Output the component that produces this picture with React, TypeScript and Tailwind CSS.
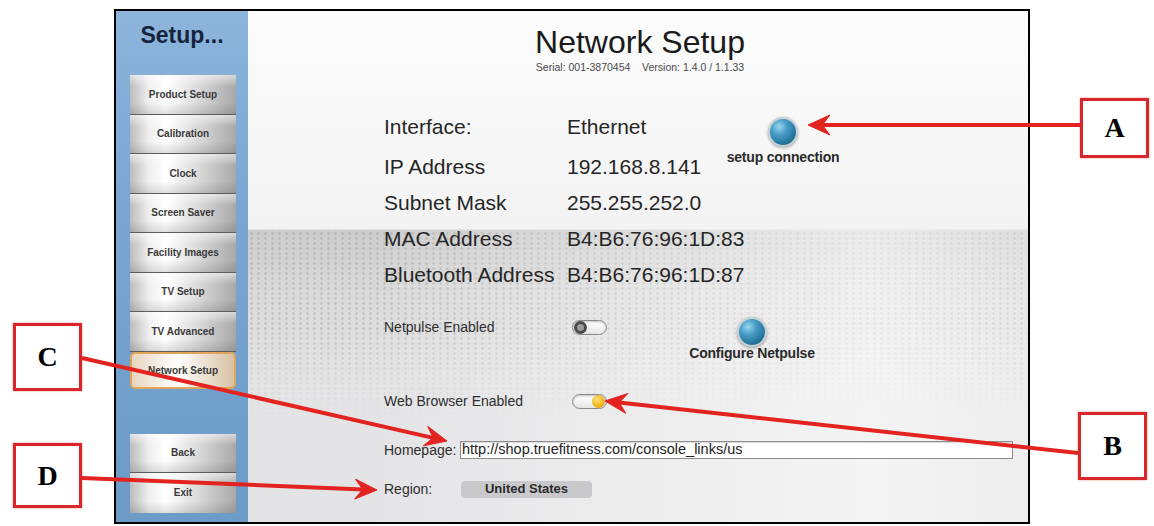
import React from "react";

const navItems = [
  "Product Setup",
  "Calibration",
  "Clock",
  "Screen Saver",
  "Facility Images",
  "TV Setup",
  "TV Advanced",
];

const infoRows = [
  { label: "Interface:", value: "Ethernet" },
  { label: "IP Address", value: "192.168.8.141" },
  { label: "Subnet Mask", value: "255.255.252.0" },
  { label: "MAC Address", value: "B4:B6:76:96:1D:83" },
  { label: "Bluetooth Address", value: "B4:B6:76:96:1D:87" },
];

// callout arrows, in page pixels
const arrows = [
  { x1: 1080, y1: 125, x2: 808, y2: 125 },
  { x1: 1078, y1: 453, x2: 605, y2: 401 },
  { x1: 82, y1: 358, x2: 447, y2: 441 },
  { x1: 82, y1: 478, x2: 377, y2: 490 },
];

const callouts = [
  { letter: "A", left: 1080, top: 98, h: 60 },
  { letter: "B", left: 1078, top: 412, h: 68 },
  { letter: "C", left: 13, top: 323, h: 68 },
  { letter: "D", left: 13, top: 443, h: 65 },
];

const metal =
  "bg-[linear-gradient(180deg,rgba(255,255,255,0.55)_0%,rgba(255,255,255,0)_30%,rgba(0,0,0,0)_70%,rgba(0,0,0,0.12)_100%),linear-gradient(90deg,#bcbcbc_0%,#efefef_18%,#ffffff_34%,#dadada_64%,#a8a8a8_100%)]";

const NavButton: React.FC<{ label: string; last?: boolean }> = ({ label, last }) => (
  <div
    className={`h-[39.5px] w-[106px] flex items-center justify-center text-[10px] font-bold text-[#3a3a3a] ${metal} ${
      last ? "" : "border-b border-[#5c5c5c]"
    }`}
  >
    {label}
  </div>
);

const Sphere: React.FC = () => (
  <div className="w-[30px] h-[30px] rounded-full bg-[#c7d2d8] p-[2px] shadow-[0_1px_3px_rgba(0,0,0,0.35)]">
    <div className="w-full h-full rounded-full bg-[radial-gradient(circle_at_35%_30%,#9ad6f0_0%,#4a9dc6_32%,#21729b_72%,#164e6c_100%)]" />
  </div>
);

const Toggle: React.FC<{ on?: boolean }> = ({ on }) => (
  <div className="w-[35px] h-[15px] rounded-full border border-[#8a8a8a] bg-[linear-gradient(180deg,#ffffff,#e6e6e6)] flex items-center px-[1px] shadow-[inset_0_1px_2px_rgba(0,0,0,0.25)]">
    {on ? (
      <div className="ml-auto w-[13px] h-[13px] rounded-full bg-[radial-gradient(circle_at_40%_35%,#ffe27a_0%,#f4b41f_55%,#e29a10_100%)]" />
    ) : (
      <div className="w-[13px] h-[13px] rounded-full border-[3px] border-[#4b4b4b] bg-[#9a9a9a]" />
    )}
  </div>
);

function arrowShape(a: { x1: number; y1: number; x2: number; y2: number }) {
  const dx = a.x2 - a.x1;
  const dy = a.y2 - a.y1;
  const len = Math.hypot(dx, dy);
  const ux = dx / len;
  const uy = dy / len;
  const nx = -uy;
  const ny = ux;
  const L = 22;
  const W = 10;
  const bx = a.x2 - ux * L;
  const by = a.y2 - uy * L;
  const mx = a.x2 - ux * L * 0.65;
  const my = a.y2 - uy * L * 0.65;
  const head = `${a.x2},${a.y2} ${bx + nx * W},${by + ny * W} ${mx},${my} ${bx - nx * W},${by - ny * W}`;
  return { head, mx, my };
}

export default function App() {
  return (
    <div className="relative w-[1154px] h-[526px] bg-white overflow-hidden font-['Liberation_Sans',Arial,sans-serif]">
      <div className="ml-[114px] mt-[9px] w-[916px] h-[515px] border-2 border-black flex">
        {/* sidebar */}
        <div className="w-[132px] shrink-0 flex flex-col bg-[linear-gradient(180deg,#8db5dc_0%,#7ba7d2_35%,#6c9bc8_100%)]">
          <div className="mt-[10px] h-[28px] leading-[28px] text-center text-[23px] font-bold text-[#14243c]">
            Setup...
          </div>
          <div className="mt-[26px] pl-[14px] flex flex-col">
            {navItems.map((item) => (
              <NavButton key={item} label={item} />
            ))}
            <div className="h-[37px] w-[106px] rounded-[5px] border-2 border-[#e2a458] flex items-center justify-center text-[10px] font-bold text-[#3a3a3a] bg-[linear-gradient(90deg,#e8d6bf_0%,#f6f1ea_30%,#ffffff_45%,#ece2d4_70%,#d8c2a4_100%)]">
              Network Setup
            </div>
          </div>
          <div className="mt-[45px] pl-[14px] flex flex-col">
            <NavButton label="Back" />
            <NavButton label="Exit" last />
          </div>
        </div>

        {/* main panel */}
        <div className="flex-1 flex flex-col text-[#262626] [background-image:linear-gradient(180deg,#fcfcfc_0%,#f3f3f3_42.6%,rgba(243,243,243,0)_43%),linear-gradient(90deg,rgba(255,255,255,0)_15%,rgba(255,255,255,0.6)_80%,rgba(255,255,255,0.35)_100%),linear-gradient(180deg,rgba(228,228,230,0)_62%,#e4e4e6_80%),radial-gradient(circle,rgba(110,110,110,0.22)_1px,transparent_1.6px),linear-gradient(180deg,#cccccc_43%,#dadada_55%,#e5e5e6_80%,#e4e4e6_100%)] [background-size:auto,auto,auto,7px_5px,auto]">
          <div className="mt-[15px] pl-[4px] text-center text-[32px] leading-[32px] text-[#1a1a1a]">
            Network Setup
          </div>
          <div className="mt-[3px] pl-[4px] text-center text-[10.5px] leading-[12px] text-[#4a4a4a] whitespace-pre">
            {"Serial: 001-3870454    Version: 1.4.0 / 1.1.33"}
          </div>

          <div className="mt-[36px] pl-[136px] grid grid-cols-[183px_151px_auto] grid-rows-[40px_36px_36px_36px_36px] text-[21px] leading-[36px] whitespace-nowrap">
            {infoRows.map((r, i) => (
              <React.Fragment key={r.label}>
                <div className="col-start-1" style={{ gridRow: i + 1 }}>
                  {r.label}
                </div>
                <div className="col-start-2" style={{ gridRow: i + 1 }}>
                  {r.value}
                </div>
              </React.Fragment>
            ))}
            <div className="col-start-3 row-start-1 row-span-2 w-[130px] pt-[8px] flex flex-col items-center">
              <Sphere />
              <div className="mt-[2px] text-[14px] leading-[16px] font-bold text-[#2a2a2a] tracking-[-0.2px]">
                setup connection
              </div>
            </div>
          </div>

          <div className="mt-[19px] pl-[136px] h-[30px] flex items-start text-[14px] text-[#2e2e2e]">
            <div className="w-[188px] leading-[30px]">Netpulse Enabled</div>
            <div className="h-[30px] flex items-center">
              <Toggle />
            </div>
            <div className="ml-[75px] w-[140px] pt-[5px] flex flex-col items-center">
              <Sphere />
              <div className="-mt-[2px] text-[14px] leading-[16px] font-bold text-[#2a2a2a] tracking-[-0.2px]">
                Configure Netpulse
              </div>
            </div>
          </div>

          <div className="mt-[44px] pl-[136px] h-[30px] flex items-center text-[14px] text-[#2e2e2e]">
            <div className="w-[188px]">Web Browser Enabled</div>
            <Toggle on />
          </div>

          <div className="mt-[25px] pl-[136px] h-[18px] flex items-center text-[14px] text-[#2e2e2e]">
            <div className="w-[76px]">Homepage:</div>
            <div className="w-[553px] h-[18px] bg-white border border-[#8c8c8c] shadow-[inset_0_1px_1px_rgba(0,0,0,0.15)] flex items-center px-[1px] text-[14.5px] text-[#222] whitespace-nowrap overflow-hidden">
              http://shop.truefitness.com/console_links/us
            </div>
          </div>

          <div className="mt-[21px] pl-[136px] h-[18px] flex items-center text-[14px] text-[#2e2e2e]">
            <div className="w-[77px]">Region:</div>
            <div className="w-[131px] h-[17px] rounded-[4px] bg-[#c9c9cb] flex items-center justify-center text-[13px] font-bold text-[#2a2a2a]">
              United States
            </div>
          </div>
        </div>
      </div>

      {/* annotation arrows */}
      <svg className="absolute inset-0 pointer-events-none" width="1154" height="526" viewBox="0 0 1154 526">
        {arrows.map((a, i) => {
          const s = arrowShape(a);
          return (
            <g key={i} fill="#e2231f" stroke="#e2231f">
              <line x1={a.x1} y1={a.y1} x2={s.mx} y2={s.my} strokeWidth="4" />
              <polygon points={s.head} strokeWidth="1" strokeLinejoin="round" />
            </g>
          );
        })}
      </svg>

      {callouts.map((c) => (
        <div
          key={c.letter}
          className="absolute w-[69px] bg-white border-[3px] border-[#d8262a] shadow-[0_0_2px_rgba(216,38,42,0.5)] flex items-center justify-center font-['Liberation_Serif',serif] font-bold text-[28px] text-black"
          style={{ left: c.left, top: c.top, height: c.h }}
        >
          {c.letter}
        </div>
      ))}
    </div>
  );
}
